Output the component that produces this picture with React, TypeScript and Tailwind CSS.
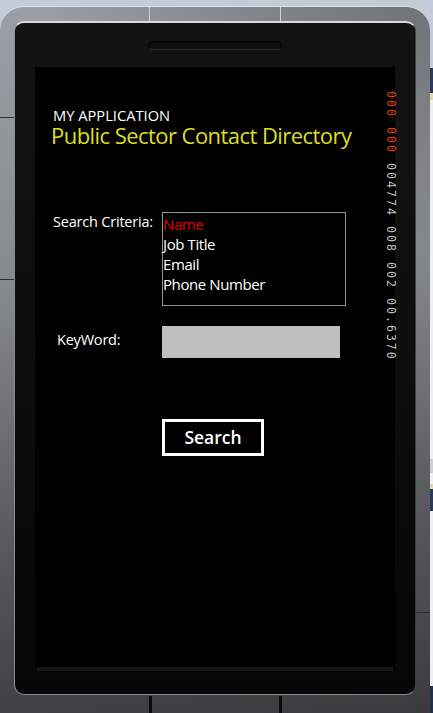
const sans = "font-['Open_Sans','Noto_Sans',sans-serif]";

function Counters() {
  return (
    <div className="absolute top-[24px] right-0 flex font-['DejaVu_Sans_Mono',monospace] text-[11.5px] leading-[9px] tracking-[2.07px] whitespace-pre [writing-mode:vertical-rl]">
      <span className="text-[#e04008]">000 000 </span>
      <span className="text-[#c0c0c0]">004774 008 002 00.6370</span>
    </div>
  );
}

export default function App() {
  return (
    <div className={`flex w-[433px] h-[713px] overflow-hidden bg-[#c3cad8] pt-[6px] ${sans}`}>
      {/* phone body */}
      <div className="relative w-[430px] h-[707px] shrink-0 rounded-t-[24px] border-t border-[#dfe3e8] bg-[linear-gradient(215deg,#6f7276_0%,transparent_28%),linear-gradient(175deg,#9ba0a8_0%,#858a90_38%,#5a5c60_70%,#3a3b3d_100%)] px-[14px] pt-[14px]">
        {/* seams */}
        <div className="absolute top-0 left-[149px] w-px h-[14px] bg-[#cfd3d8]" />
        <div className="absolute top-0 left-[280px] w-px h-[14px] bg-[#cfd3d8]" />
        <div className="absolute top-[689px] left-[149px] w-[3px] h-[18px] bg-[#0a0a0a]" />
        <div className="absolute top-[689px] left-[279px] w-[3px] h-[18px] bg-[#0a0a0a]" />
        <div className="absolute top-[110px] left-0 w-[14px] h-px bg-[#2b2d30]" />
        <div className="absolute top-[272px] left-0 w-[14px] h-px bg-[#2b2d30]" />
        <div className="absolute top-[605px] right-0 w-[14px] h-px bg-[#2b2d30]" />

        {/* bezel */}
        <div className="flex flex-col h-[674px] rounded-[10px] border border-t-2 border-[#8a8d90] border-t-[#d8dadc] border-r-[#3c3e40] bg-gradient-to-b from-[#121313] via-[#0c0d0d] to-[#050606] px-[20px] pt-[18px]">
          <div className="self-center w-[134px] h-[9px] rounded-full border border-[#050505] border-b-[#2c2d2e] bg-[#0e0e0e]" />
          <div className="relative h-[600px] mt-[17px] bg-black pt-[39px]">
            <Counters />
            <p className="pl-[18px] text-[14.7px] leading-[18px] text-white">MY APPLICATION</p>
            <h1 className="pl-[16px] text-[22px] leading-[22px] tracking-[-0.55px] text-[#dcdf1e]">Public Sector Contact Directory</h1>

            <div className="flex mt-[66px] pl-[18px]">
              <label className="w-[109px] text-[14.5px] leading-[20px] tracking-[-0.2px] text-white">Search Criteria:</label>
              <ul className="w-[184px] h-[94px] border border-[#8f9598] pt-[1px] text-[15px] leading-[20px] tracking-[-0.4px] text-white">
                <li className="text-[#e00000]">Name</li>
                <li>Job Title</li>
                <li>Email</li>
                <li>Phone Number</li>
              </ul>
            </div>

            <div className="flex mt-[20px] pl-[22px]">
              <label className="w-[105px] text-[14.5px] leading-[28px] tracking-[-0.2px] text-white">KeyWord:</label>
              <div className="w-[178px] h-[32px] bg-[#bebebe]" />
            </div>

            <button className="block ml-[127px] mt-[61px] w-[102px] h-[37px] border-[3px] border-white text-[17.5px] font-semibold leading-none text-white">
              Search
            </button>
          </div>
          <div className="h-[4px] mx-[2px] bg-[#141615]" />
        </div>
      </div>

      {/* desktop showing behind the emulator */}
      <div className="flex flex-col flex-1 -mt-[6px]">
        <div className="h-[68px] bg-[#c3cad8]" />
        <div className="h-[25px] bg-[#2b3a5c]" />
        <div className="h-[7px] bg-[#e6d6a8]" />
        <div className="h-[359px] bg-[#eef0f2]" />
        <div className="h-[14px] bg-[#cfd1d3]" />
        <div className="h-[11px] bg-[#eef0f2]" />
        <div className="h-[5px] bg-[#e6d6a8]" />
        <div className="h-[22px] bg-[#2b3a5c]" />
        <div className="h-[175px] bg-[#eef0f2]" />
        <div className="flex-1 bg-[#22304f]" />
      </div>
    </div>
  );
}
